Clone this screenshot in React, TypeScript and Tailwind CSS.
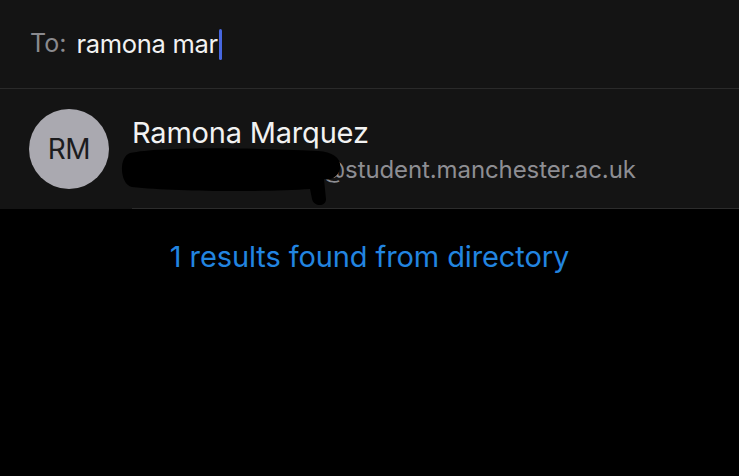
import React from 'react';

const font = { fontFamily: 'Inter, "Noto Sans", sans-serif' };

export default function App() {
  return (
    <div className="w-[739px] h-[476px] bg-black overflow-hidden" style={font}>
      {/* To field */}
      <div className="h-[89px] bg-[#141414] flex items-center pl-[30px] border-b border-[#2a2a2a]">
        <span className="text-[25px] text-[#8a8a8e]">To:</span>
        <span className="ml-[10px] text-[25.5px] text-[#f2f2f2] tracking-[-0.3px]">ramona mar</span>
        <span className="ml-[1px] w-[3px] h-[31px] rounded-full bg-[#4767e0]" />
      </div>

      {/* Contact row */}
      <div className="relative h-[120px] bg-[#141414] flex items-center pl-[29px]">
        <div className="w-[80px] h-[80px] rounded-full bg-[#aaa9b0] flex items-center justify-center">
          <span className="text-[28px] text-[#1c1c1e] tracking-[-0.5px]">RM</span>
        </div>
        <div className="ml-[23px] flex flex-col h-full pt-[25px] flex-1 border-b border-[#2c2c2c]">
          <span className="text-[29px] leading-[38px] text-[#f2f2f2] tracking-[-0.2px]">Ramona Marquez</span>
          <span className="text-[24px] leading-[36px] text-[#8e8e93] pl-[190px] tracking-[-0.1px]">
            @student.manchester.ac.uk
          </span>
        </div>
        {/* redaction scribble */}
        <svg className="absolute left-[118px] top-[56px]" width="230" height="66" viewBox="0 0 230 66">
          <path
            d="M12 8 C40 2 120 2 200 6 C216 7 224 14 222 24 C220 32 212 36 206 34 L208 54 C208 62 196 62 194 54 L192 44 C150 47 60 47 14 42 C2 40 0 12 12 8 Z"
            fill="#000"
          />
        </svg>
      </div>

      {/* Results */}
      <div className="pt-[26px] text-center">
        <span className="text-[29px] text-[#2285e0] tracking-[-0.1px]">1 results found from directory</span>
      </div>
    </div>
  );
}
